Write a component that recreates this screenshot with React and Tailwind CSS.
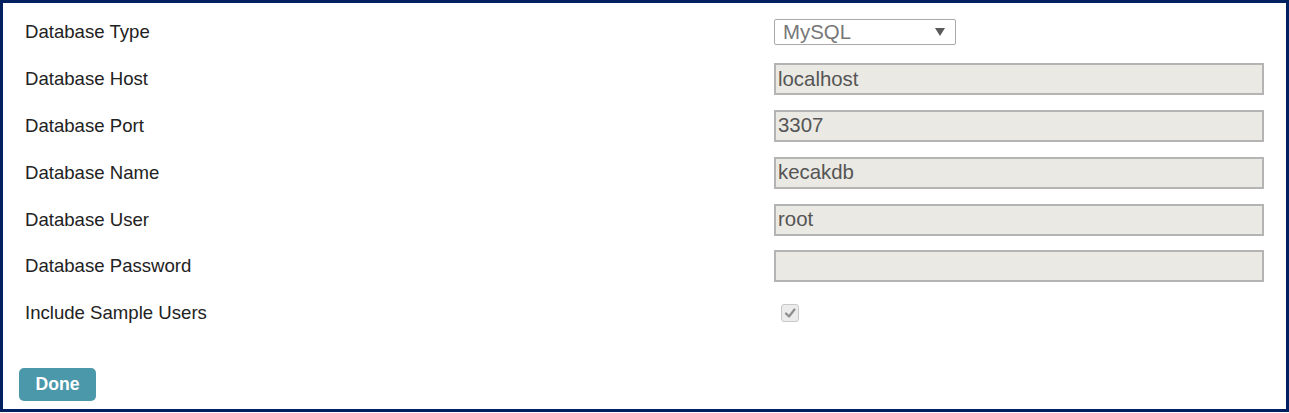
import { useState } from "react";

const fields = [
  { label: "Database Host", value: "localhost" },
  { label: "Database Port", value: "3307" },
  { label: "Database Name", value: "kecakdb" },
  { label: "Database User", value: "root" },
  { label: "Database Password", value: "" },
];

function Row({ label, children }) {
  return (
    <div className="flex items-center h-[46.8px]">
      <div className="w-[749px] shrink-0 text-[18.6px] text-[#222]">{label}</div>
      <div className="flex-1 flex items-center">{children}</div>
    </div>
  );
}

export default function App() {
  const [dbType, setDbType] = useState("MySQL");

  return (
    <div
      className="w-[1289px] h-[412px] bg-white border-[3px] border-[#002060] flex flex-col"
      style={{ fontFamily: '"Liberation Sans", Arial, sans-serif' }}
    >
      <div className="pt-[6px] pl-[22px] pr-[22px]">
        <Row label="Database Type">
          <div className="relative w-[182px] h-[26px] border border-[#a9a9a9] bg-white rounded-[2px] flex items-center">
            <select
              value={dbType}
              onChange={(e) => setDbType(e.target.value)}
              className="appearance-none w-full h-full pl-[8px] text-[20.4px] leading-none text-[#777] bg-transparent outline-none"
            >
              <option>MySQL</option>
              <option>MSSQL</option>
              <option>Oracle</option>
            </select>
            <svg className="absolute right-[10px] top-[8px] pointer-events-none" width="10" height="8" viewBox="0 0 10 8">
              <path d="M0 0 H10 L5 8 Z" fill="#5a5a5a" />
            </svg>
          </div>
        </Row>

        {fields.map((f) => (
          <Row key={f.label} label={f.label}>
            <input
              type="text"
              readOnly
              value={f.value}
              className="w-[490px] h-[32px] px-[2px] border-2 border-[#b4b4b4] bg-[#eae9e3] text-[20.4px] text-[#555] outline-none"
            />
          </Row>
        ))}

        <Row label="Include Sample Users">
          <div className="ml-[7px] w-[18px] h-[18px] rounded-[3px] border border-[#c8c8c8] bg-[#ececec] flex items-center justify-center">
            <svg width="12" height="12" viewBox="0 0 12 12">
              <path d="M2 6.5 L5 9.5 L10.5 2.5" stroke="#8e8e8e" strokeWidth="2.2" fill="none" strokeLinecap="round" strokeLinejoin="round" />
            </svg>
          </div>
        </Row>
      </div>

      <div className="pl-[16px] pt-[31px]">
        <button className="w-[77px] h-[33px] rounded-[5px] bg-[#4b98aa] text-white font-bold text-[17.6px]">
          Done
        </button>
      </div>
    </div>
  );
}
